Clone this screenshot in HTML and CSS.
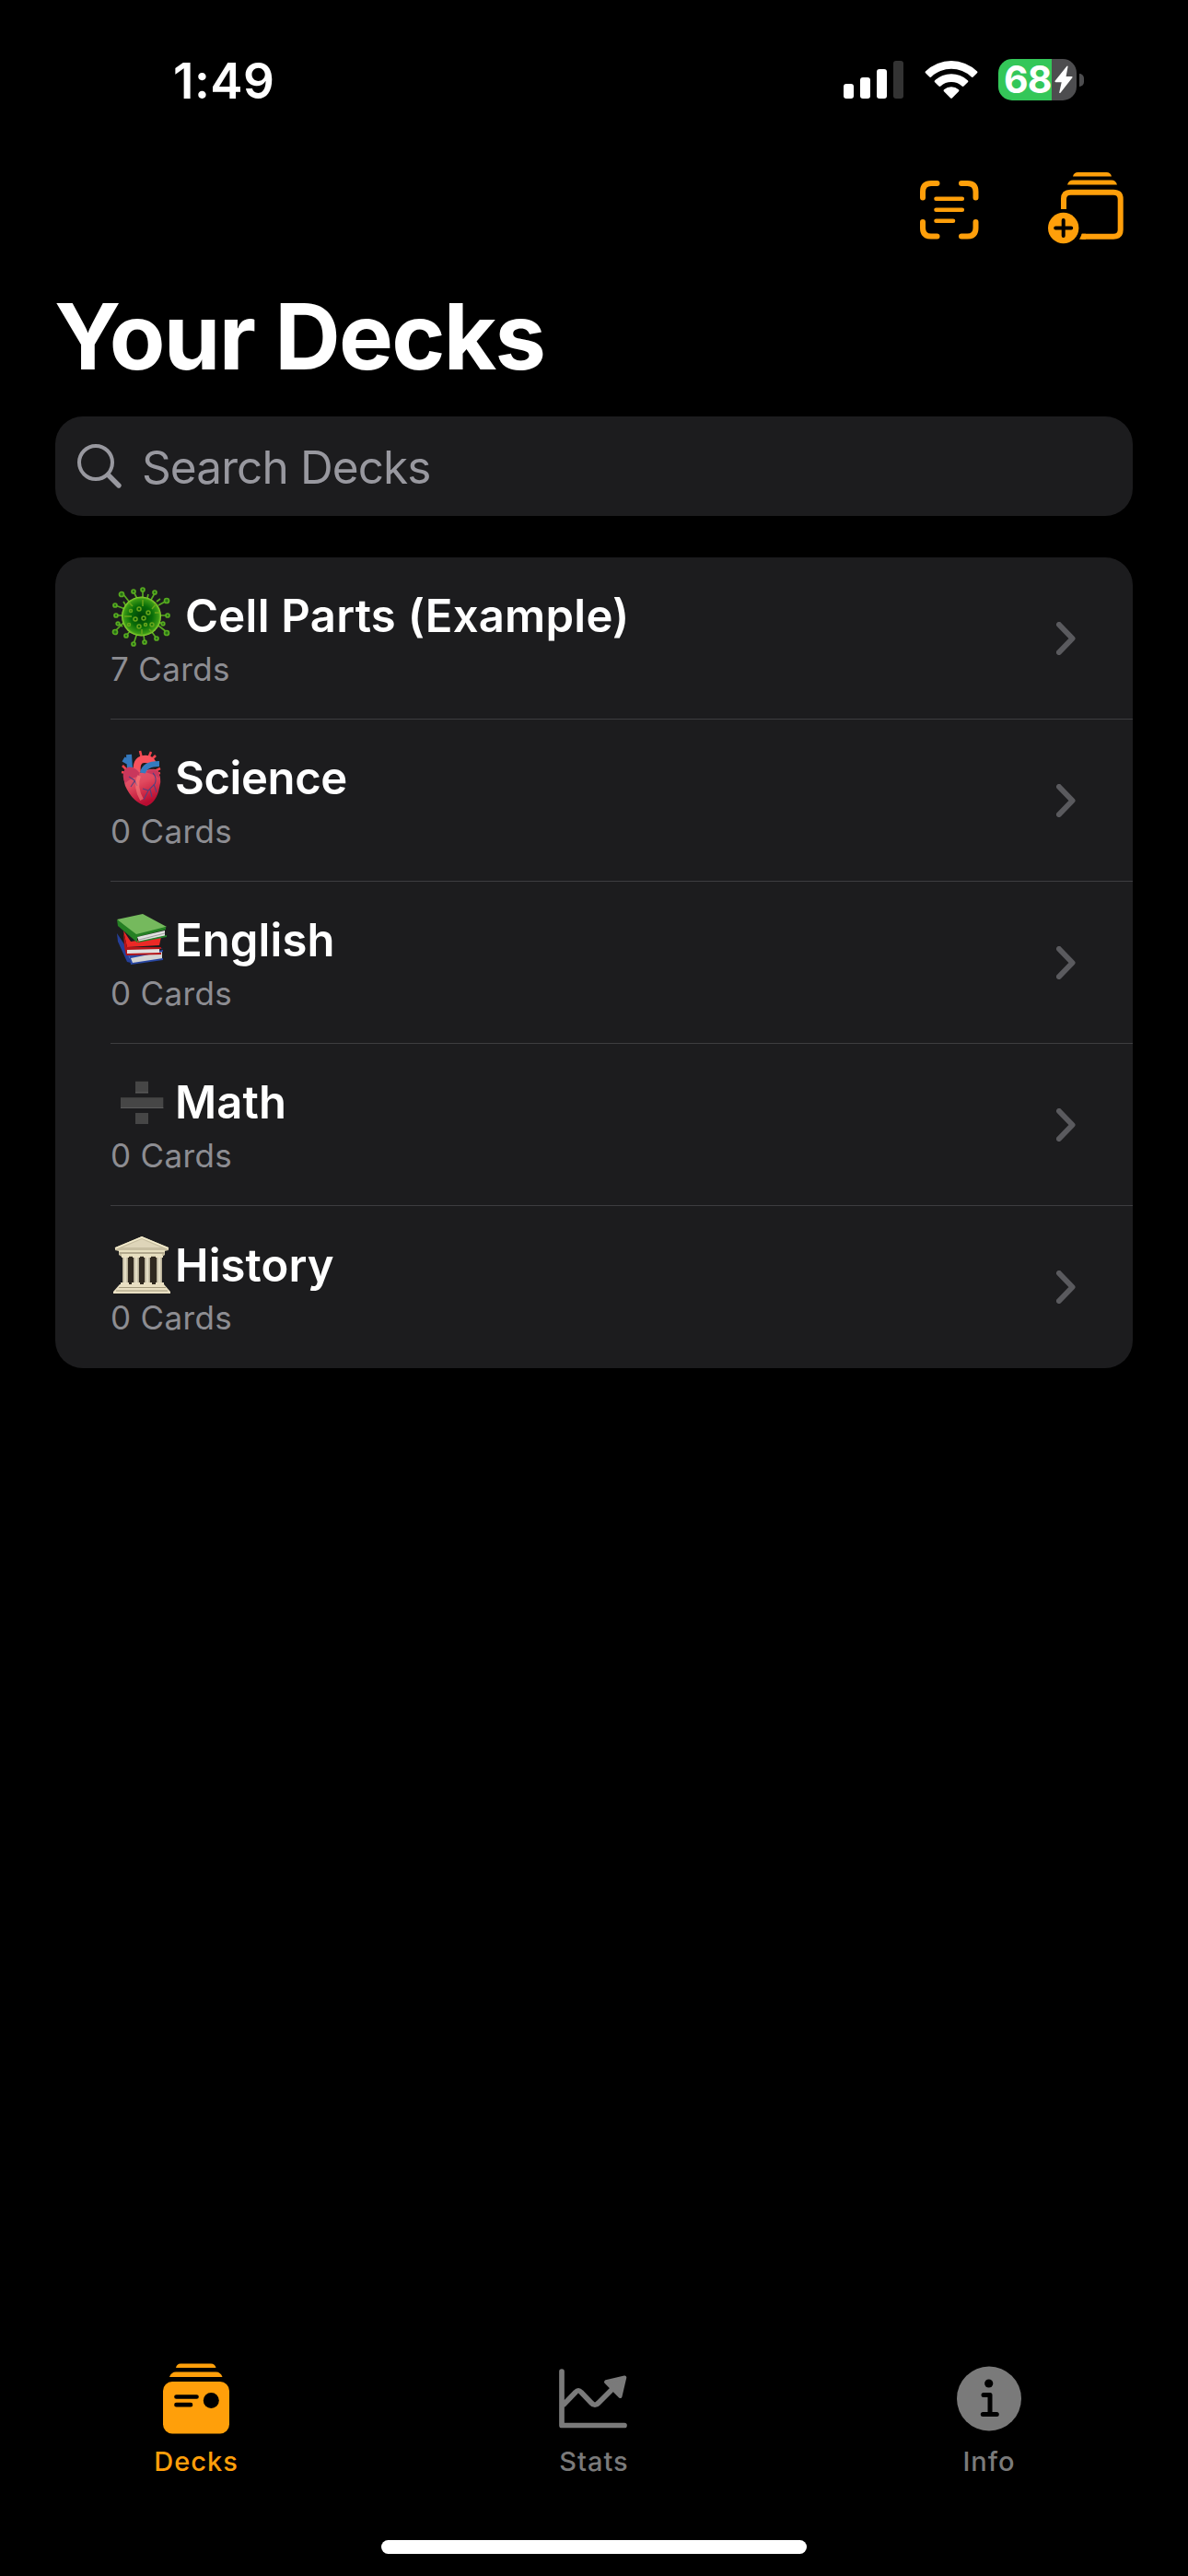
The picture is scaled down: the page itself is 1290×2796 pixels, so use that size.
FILE: index.html
```html
<!DOCTYPE html>
<html lang="en">
<head>
<meta charset="utf-8">
<title>Your Decks</title>
<link rel="stylesheet" href="styles.css">
</head>
<body>
<div class="screen">
  <header class="status">
    <span class="time">1:49</span>
    <div class="indicators">
      <svg class="signal" width="65" height="42" viewBox="0 0 65 42"><g fill="#fff"><rect y="26" width="11" height="16" rx="3"/><rect x="18" y="19" width="11" height="23" rx="3"/><rect x="36" y="10" width="11" height="32" rx="3"/></g><rect x="54" y="1" width="11" height="41" rx="3" fill="#333"/></svg>
      <svg class="wifi" width="58" height="43" viewBox="0 0 58 43" fill="#fff"><path d="M1.2 12.2A40 40 0 0 1 56.8 12.2Q58 13.300 57 14.300L52.700 18.500Q51.800 19.300 50.800 18.400A32 32 0 0 0 7.200 18.400Q6.200 19.300 5.300 18.500L1 14.300Q0 13.300 1.200 12.200Z"/><path d="M11.200 22.200A26.500 26.500 0 0 1 46.800 22.200Q47.900 23.300 46.900 24.300L42.500 28.500Q41.600 29.300 40.600 28.400A17.500 17.500 0 0 0 17.400 28.400Q16.400 29.300 15.500 28.500L11.100 24.300Q10.100 23.300 11.200 22.200Z"/><path d="M21 32.200A12.500 12.500 0 0 1 37 32.200Q38 33.200 37 34.200L29.800 41.500Q29 42.200 28.200 41.500L21 34.200Q20 33.200 21 32.200Z"/></svg>
      <div class="battery">
        <div class="cell"><span>68</span><svg width="20" height="31" viewBox="0 0 20 31" fill="#fff"><path d="M13.500.7Q14.700-.2 14.500 1.500L12.600 12H18.500Q20.200 12.200 19.200 13.600L6.500 29.700Q5 30.800 5.300 29L7.700 18.300H1.500Q-.2 18 .8 16.600Z"/></svg></div>
        <div class="nub"></div>
      </div>
    </div>
  </header>

  <nav class="toolbar">
    <svg class="scan" width="64" height="64" viewBox="0 0 64 64" fill="none" stroke="#ff9f0a" stroke-linecap="round"><path stroke-width="6" d="M3 18.500V12Q3 3 12 3h6.500M45 3h6.500Q60.500 3 60.500 12v6.500M60.500 45v6.500Q60.500 60.500 51.500 60.500H45M18.500 60.500H12Q3 60.500 3 51.500V45"/><path stroke-width="4.600" d="M17.500 19.700h28.300M17.500 31.700h28.300M17.500 43.700h18.500"/></svg>
    <svg width="82" height="78" viewBox="0 0 82 78"><g fill="#ff9f0a"><path d="M27 4.500Q28 0 32.500 0h31Q68 0 69 4.500zM21 13.500Q22.500 8.500 27 8.500h42Q73.500 8.500 75 13.500z"/><circle cx="16.700" cy="60.500" r="16.700"/></g><path d="M17 40V29Q17 21.700 24.500 21.700h46.500Q78.700 21.700 78.700 29v33.500Q78.700 69.700 71 69.700H36.500" fill="none" stroke="#ff9f0a" stroke-width="6"/><path d="M34 72.700l3-6h4v6z" fill="#ff9f0a"/><path d="M16.700 52v17M8.200 60.500h17" stroke="#000" stroke-width="4" stroke-linecap="round"/></svg>
  </nav>

  <h1>Your Decks</h1>

  <div class="search">
    <svg width="50" height="50" viewBox="0 0 50 50" fill="none" stroke="#98989f"><circle cx="21" cy="21" r="18" stroke-width="4"/><path d="M34.500 34.500L46 46" stroke-width="5.400" stroke-linecap="round"/></svg>
    <span>Search Decks</span>
  </div>

  <main class="list">
    <section class="row">
      <div class="info">
        <h2 class="first">
          <svg class="emoji" viewBox="0 0 66 66">
            <defs><radialGradient id="virus"><stop offset="0" stop-color="#003f08"/><stop offset=".55" stop-color="#086c08"/><stop offset=".88" stop-color="#3b9915"/><stop offset="1" stop-color="#96dc35"/></radialGradient></defs>
            <g stroke="#58aa20" stroke-width="1.700" fill="#246c16"><path d="M35 13V5M44 15l4-7M52 21l9-5M54 32h8M52 43l9 7M45 50l5 7M36 53l1 8M29 51l-4 12M22 48l-5 6M14 40l-9 9M14 32H5M16 25l-11-4M21 18l-8-10M29 14L25 6M17 22l-3-5M50 17l4-3M13 44l-5-4M51 39l7 2M40 13l1-4"/><g><circle cx="35" cy="4" r="2"/><circle cx="48" cy="7" r="2"/><circle cx="61" cy="16" r="2.500"/><circle cx="62" cy="32" r="2"/><circle cx="61" cy="51" r="2.500"/><circle cx="50" cy="57" r="2"/><circle cx="37" cy="61" r="2"/><circle cx="25" cy="63" r="2"/><circle cx="17" cy="54" r="2"/><circle cx="5" cy="50" r="2.500"/><circle cx="6" cy="32" r="2"/><circle cx="5" cy="21" r="2"/><circle cx="12" cy="9" r="2.500"/><circle cx="25" cy="6" r="2"/><circle cx="57" cy="41" r="1.800"/><circle cx="8" cy="41" r="1.800"/></g></g>
            <circle cx="33.500" cy="33" r="21.500" fill="url(#virus)"/>
            <g fill="none" stroke="#69a51b" stroke-width="1.500"><circle cx="31" cy="25" r="2"/><circle cx="41" cy="29" r="2"/><circle cx="36" cy="35" r="2"/><circle cx="27" cy="36" r="2"/><circle cx="31" cy="44" r="2"/><circle cx="38" cy="42" r="1.500"/><circle cx="45" cy="42" r="2"/><circle cx="22" cy="27" r="1.500"/><circle cx="20" cy="42" r="1.500"/><path d="M35 22v-7M45 25l5-6M48 29h5M23 33h-8M34 47v5M42 47l3 3M24 22l-4-4"/></g>
          </svg>
          <span>Cell Parts (Example)</span>
        </h2>
        <p>7 Cards</p>
      </div>
      <svg class="chevron" viewBox="0 0 21 36"><path d="M3 3l14.500 15L3 33"/></svg>
    </section>
    <section class="row">
      <div class="info">
        <h2 class="tight">
          <svg class="emoji" viewBox="0 0 66 66">
            <defs><linearGradient id="heart" x1="0" y1="0" x2=".4" y2="1"><stop offset="0" stop-color="#dc617c"/><stop offset=".5" stop-color="#e1495e"/><stop offset="1" stop-color="#b80c31"/></linearGradient></defs>
            <path d="M21 22L20 7M14 12l7 4" stroke="#3478bd" stroke-width="6" fill="none"/><path d="M18 24l-5-5M17 27l-5-1M48 25l6-3M48 28l6-1M34 11l-2-8M41 11l3-7M45 12l4-4" stroke="#f0444c" stroke-width="2.600"/>
            <path d="M29 27Q27 13 36 12q9-1 10 7" fill="none" stroke="#f9525d" stroke-width="8"/><path d="M20 21Q29 20 32 27 41 22 49 23 57 31 53 43 50 59 39 63 24 59 16 41 12 27 20 21Z" fill="url(#heart)"/><path d="M15 24q4-6 11-2 9 5 3 9-8 2-13 7-4-7-1-14M38 26q7-5 14-1l2 8q-8-5-16-7" fill="#c9375c"/>
            <path d="M35 27q2-10 18-10" fill="none" stroke="#347bc0" stroke-width="6"/><g fill="none" stroke="#54417f" stroke-width="1.100"><path d="M46 27q5 5 2 12l-7 7-5 10M47 39l3 9M41 46l-6-2M43 45l2 8M20 31l6 4 3 6M26 36l-4 6"/></g><path d="M31 30q-5 12 3 26" fill="none" stroke="#ff8984" stroke-opacity=".55" stroke-width="4"/>
          </svg>
          <span>Science</span>
        </h2>
        <p>0 Cards</p>
      </div>
      <svg class="chevron" viewBox="0 0 21 36"><path d="M3 3l14.500 15L3 33"/></svg>
    </section>
    <section class="row">
      <div class="info">
        <h2>
          <svg class="emoji" viewBox="0 0 66 66">
            <path d="M7 25l10 15 5 17-4-1L8 34z" fill="#253f99"/><path d="M17 45l40-4-36 12z" fill="#3158bf"/><path d="M20 50l36-6v9l-33 5z" fill="#d4d4d4"/><path d="M20 49l37-6v2l-35 7 2 5 33-5v2l-35 5z" fill="#2746a3"/>
            <path d="M14 22l8 12 33-5-2 9-35 2z" fill="#ec2926"/><path d="M17 40h36v7l-36 1z" fill="#dfdfdf"/><path d="M14 23l4 17h37v2l-37 1v4l37-1v2l-38 1-2-9z" fill="#b51418"/>
            <path d="M7 10l28-6 26 14-33 10z" fill="#75b95d"/><path d="M7 10l21 16 32-8v3L29 29v6L8 17z" fill="#258024"/><path d="M29 29l30-7v6l-28 6z" fill="#e1e1df"/><path d="M29 34l32-7v2l-31 6z" fill="#25822c"/><path d="M31 32l28-7" stroke="#9d9d9d"/>
          </svg>
          <span>English</span>
        </h2>
        <p>0 Cards</p>
      </div>
      <svg class="chevron" viewBox="0 0 21 36"><path d="M3 3l14.500 15L3 33"/></svg>
    </section>
    <section class="row">
      <div class="info">
        <h2>
          <svg class="emoji" viewBox="0 0 66 66"><path fill="#464646" d="M27 9.700h14v13H27zM11 27.300h46.300V39H11zM27 44h14v12H27z"/><path d="M27 21.700h14M11 38.500h46.300" stroke="#5c5c5c"/></svg>
          <span>Math</span>
        </h2>
        <p>0 Cards</p>
      </div>
      <svg class="chevron" viewBox="0 0 21 36"><path d="M3 3l14.500 15L3 33"/></svg>
    </section>
    <section class="row">
      <div class="info">
        <h2>
          <svg class="emoji" viewBox="0 0 66 66">
            <defs><linearGradient id="column" x1="0" x2="1"><stop offset="0" stop-color="#aaa28b"/><stop offset=".5" stop-color="#f0e9d0"/><stop offset="1" stop-color="#aaa28a"/></linearGradient></defs>
            <path d="M18 23h32v31H18z" fill="#302920"/><path d="M5 14L34 2l29 12v3l-4 1v4l-3 2H12l-3-2v-4l-4-1z" fill="#c7bea1"/><path d="M13 14l21-9 21 9z" fill="#ded5b9"/><path d="M5 15L34 3l29 12M9 18h50M12 22h44" fill="none" stroke="#f3ebcc" stroke-width="1.700"/><path d="M10 20h48" stroke="#9c9278"/>
            <g fill="url(#column)"><path d="M13 24h6v29h-6z"/><path d="M25 24h6v29h-6z"/><path d="M37 24h6v29h-6z"/><path d="M50 24h6v29h-6z"/></g><g fill="#e9dfc2"><path d="M12 23h8v2h-8zM24 23h8v2h-8zM36 23h8v2h-8zM49 23h8v2h-8zM11 52h9v2h-9zM23 52h9v2h-9zM36 52h9v2h-9zM49 52h9v2h-9zM10 54h48l7 8v2H3v-2z"/></g><path d="M9 57.500h51M6 61h56" stroke="#a39a7d"/>
          </svg>
          <span>History</span>
        </h2>
        <p>0 Cards</p>
      </div>
      <svg class="chevron" viewBox="0 0 21 36"><path d="M3 3l14.500 15L3 33"/></svg>
    </section>
  </main>

  <footer class="tabs">
    <div class="tab active">
      <svg width="72" height="78" viewBox="0 0 72 78"><path fill="#ff9f0a" d="M14 5Q15 .5 19 .5h33Q56.500.5 57.500 5zM7 15Q9 9.500 14 9.500h43.500Q62.500 9.500 64.500 15z"/><rect y="20" width="72" height="56.500" rx="10" fill="#ff9f0a"/><path d="M14.500 36.500h22M14.500 45.200h15.500" stroke="#000" stroke-width="4.700" stroke-linecap="round"/><circle cx="52.300" cy="40.500" r="8.500"/></svg>
      <span>Decks</span>
    </div>
    <div class="tab">
      <svg width="76" height="78" viewBox="0 0 76 78" fill="none" stroke="#7a7a7a" stroke-width="5.700" stroke-linecap="round" stroke-linejoin="round"><path d="M3 9v58.500h68M5 45L18 31.500Q21 28 24 31.500L35 43Q39 47.500 43 43L60 26"/><path d="M51 20.300L71.300 15.500 66.500 36z" fill="#7a7a7a" stroke-width="4"/></svg>
      <span>Stats</span>
    </div>
    <div class="tab">
      <svg width="70" height="78" viewBox="0 0 70 78"><circle cx="35" cy="38.500" r="35" fill="#7a7a7a"/><circle cx="34.700" cy="22" r="4.600"/><path d="M29 34.500h7V55.500M28.300 55.500h15" fill="none" stroke="#000" stroke-width="5" stroke-linecap="round" stroke-linejoin="round"/></svg>
      <span>Info</span>
    </div>
  </footer>
  <div class="home"></div>
</div>
</body>
</html>
```
FILE: styles.css
```css
* { box-sizing: border-box; }
body { margin: 0; background: #000; color: #fff; font-family: Inter, "Liberation Sans", sans-serif; }
svg { display: block; flex: none; }
h1, h2, p { margin: 0; white-space: nowrap; }
.screen { width: 1290px; height: 2796px; display: flex; flex-direction: column; overflow: hidden; }

.status { height: 176px; flex: none; display: flex; justify-content: space-between; padding: 0 113px 0 188px; }
.time { font-size: 53px; font-weight: 600; line-height: 177px; letter-spacing: 0.5px; }
.indicators { display: flex; padding-top: 64px; }
.signal { margin-top: 1px; }
.wifi { margin: 1px 22px 0 23px; }
.battery { display: flex; align-items: center; gap: 3px; height: 45px; }
.cell { width: 85px; height: 45px; border-radius: 15px; background: linear-gradient(90deg, #34c759 58px, #4d4d4f 58px); display: flex; align-items: center; padding-left: 6px; }
.cell span { width: 55px; font-size: 41px; font-weight: 700; line-height: 45px; letter-spacing: -1px; }
.nub { width: 5px; height: 14px; border-radius: 0 5px 5px 0; background: #4d4d4f; }

.toolbar { height: 130px; flex: none; display: flex; justify-content: flex-end; gap: 75px; padding: 11px 70px 0 0; }
.scan { margin-top: 9px; }
h1 { height: 118px; line-height: 119px; padding-left: 59px; font-size: 99px; font-weight: 700; letter-spacing: -1.7px; }
.search { height: 108px; flex: none; margin: 28px 60px 0; border-radius: 30px; background: #1c1c1e; display: flex; align-items: center; padding-left: 23px; gap: 21px; color: #98989f; font-size: 49.5px; line-height: 60px; letter-spacing: -0.9px; }
.search span { padding-top: 2px; }

.list { margin: 45px 60px 0; border-radius: 30px; background: #1c1c1e; overflow: hidden; }
.row { height: 176px; margin-left: 60px; display: flex; justify-content: space-between; align-items: center; padding-right: 62px; border-bottom: 1px solid #3d3d40; }
.row:last-child { border-bottom: 0; }
.info { height: 176px; padding-top: 31px; }
h2 { display: flex; align-items: center; height: 66px; font-size: 49px; font-weight: 600; letter-spacing: 0.1px; line-height: 66px; gap: 4px; }
h2.first { gap: 15px; letter-spacing: 0.25px; }
h2.tight { letter-spacing: -0.4px; }
h2 span { padding-top: 1px; }
.emoji { width: 66px; height: 66px; }
.info p { color: #8d8d92; font-size: 35px; line-height: 48px; letter-spacing: 0.35px; }
.chevron { width: 21px; height: 36px; fill: none; stroke: #5a5a5e; stroke-width: 6; stroke-linecap: round; stroke-linejoin: round; }

.tabs { margin-top: auto; flex: none; display: grid; grid-template-columns: repeat(3, 430px); height: 192px; }
.tab { display: flex; flex-direction: column; align-items: center; color: #7a7a7a; font-size: 29px; font-weight: 450; line-height: 40px; letter-spacing: 1px; gap: 9px; }
.tab:first-child { padding-right: 4px; }
.tab:last-child { padding-right: 2px; }
.tab.active { color: #ff9f0a; }
.home { width: 462px; height: 15px; flex: none; margin: 0 auto 24px; border-radius: 8px; background: #fff; }
```
